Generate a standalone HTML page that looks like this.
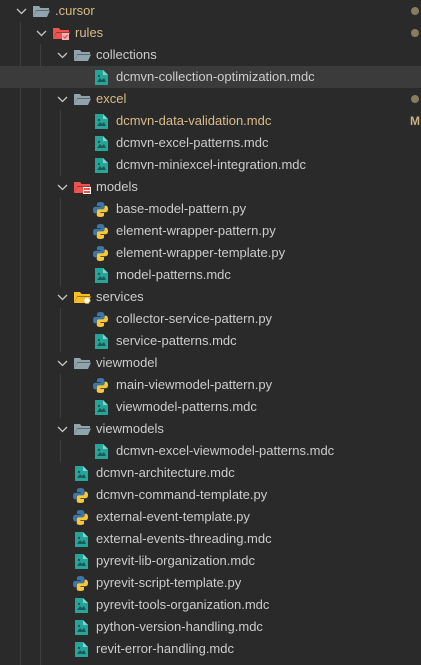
<!DOCTYPE html><html><head><style>
body{margin:0;width:421px;height:665px;background:#2a2a2a;overflow:hidden;font-family:"Liberation Sans",sans-serif;font-size:13px;color:#cccccc;position:relative}
.r{position:absolute;left:0;width:421px;height:22px;line-height:22px;white-space:nowrap}
.sel{background:#3b3b3b}
.t{position:absolute;top:0}
.y{color:#d9bc86}
.dot{position:absolute;left:411px;top:7px;width:8px;height:8px;border-radius:50%;background:#8b7b5e}
.M{position:absolute;left:410px;top:0;color:#c9b07f;font-weight:bold;font-size:12px}
.g{position:absolute;width:1px;background:#3e3e3e}
svg{position:absolute;top:3px}
</style></head><body>
<div class="g" style="left:20px;top:22px;height:643px"></div>
<div class="g" style="left:40px;top:44px;height:621px"></div>
<div class="g" style="left:60px;top:66px;height:22px"></div>
<div class="g" style="left:60px;top:110px;height:66px"></div>
<div class="g" style="left:60px;top:198px;height:88px"></div>
<div class="g" style="left:60px;top:308px;height:44px"></div>
<div class="g" style="left:60px;top:374px;height:44px"></div>
<div class="g" style="left:60px;top:440px;height:22px"></div>
<div id="tree"></div>
<script>
var rows=[
["f",0,".cursor","grey",1,"dot"],["f",1,"rules","red",1,"dot"],["f",2,"collections","grey",0],
["m",3,"dcmvn-collection-optimization.mdc",0,0,"sel"],["f",2,"excel","grey",1,"dot"],
["m",3,"dcmvn-data-validation.mdc",0,1,"M"],["m",3,"dcmvn-excel-patterns.mdc"],["m",3,"dcmvn-miniexcel-integration.mdc"],
["f",2,"models","redm",0],["p",3,"base-model-pattern.py"],["p",3,"element-wrapper-pattern.py"],["p",3,"element-wrapper-template.py"],["m",3,"model-patterns.mdc"],
["f",2,"services","yel",0],["p",3,"collector-service-pattern.py"],["m",3,"service-patterns.mdc"],
["f",2,"viewmodel","grey",0],["p",3,"main-viewmodel-pattern.py"],["m",3,"viewmodel-patterns.mdc"],
["f",2,"viewmodels","grey",0],["m",3,"dcmvn-excel-viewmodel-patterns.mdc"],
["m",2,"dcmvn-architecture.mdc"],["p",2,"dcmvn-command-template.py"],["p",2,"external-event-template.py"],["m",2,"external-events-threading.mdc"],["m",2,"pyrevit-lib-organization.mdc"],["p",2,"pyrevit-script-template.py"],["m",2,"pyrevit-tools-organization.mdc"],["m",2,"python-version-handling.mdc"],["m",2,"revit-error-handling.mdc"]];
var h="";
rows.forEach(function(r,i){
 var tx=Math.round(55+20.3*r[1]);
 var s='<div class="r'+(r[5]=="sel"?" sel":"")+'" style="top:'+(i*22)+'px">';
 if(r[0]=="f"){
  var cx=tx-34, col={grey:"#90a4ae",red:"#ef5350",redm:"#ef5350",yel:"#f9bd26"}[r[3]];
  s+='<svg style="left:'+(cx-5)+'px;top:8px" width="11" height="7"><path d="M1 1l4.5 4.5L10 1" fill="none" stroke="#c5c5c5" stroke-width="1.3"/></svg>';
  s+='<svg style="left:'+(tx-22)+'px;top:5px" width="17" height="13"><path d="M0 1h6l1.5 2H16v2H3.5L0 12z" fill="'+col+'"/><path d="M3.5 5.5H17L14 12H0z" fill="'+col+'"/>'+
   (r[3]=="red"?'<rect x="9" y="6" width="7" height="7" fill="#f8b4b4"/><path d="M10.5 9.5l1.5 1.5 2.5-3" stroke="#e53935" fill="none"/>':'')+
   (r[3]=="redm"?'<rect x="9" y="6" width="8" height="7" fill="#fff"/><rect x="10" y="7" width="6" height="2" fill="#ef5350"/><rect x="10" y="10" width="6" height="2" fill="#ef5350"/>':'')+
   (r[3]=="yel"?'<circle cx="13" cy="9.5" r="3" fill="#fff" stroke="#f9bd26" stroke-dasharray="1.5 1"/>':'')+'</svg>';
 } else if(r[0]=="m"){
  s+='<svg style="left:'+(tx-21)+'px;top:4px" width="13" height="15"><path d="M0 0h8l5 5v10H0z" fill="#26a69a"/><path d="M8 0v5h5" fill="#7fd3c9"/><path d="M2 12l3-4 2 2 2-2 2 4z" fill="#1d5a55"/><circle cx="4" cy="6" r="1.2" fill="#1d5a55"/></svg>';
 } else {
  s+='<svg style="left:'+(tx-23)+'px;top:4px" width="15" height="15"><path d="M7.5 0C4 0 4 1.5 4 1.5V4h3.6v.8H2.5S0 4.5 0 8s2.2 3.4 2.2 3.4H3.5V9.6s0-2 2-2h3.8s1.9 0 1.9-1.9V2S11.5 0 7.5 0z" fill="#3b77a8"/><path d="M7.5 15c3.5 0 3.5-1.5 3.5-1.5V11H7.4v-.8h5.1S15 10.5 15 7s-2.2-3.4-2.2-3.4H11.5v1.8s0 2-2 2H5.7s-1.9 0-1.9 1.9V13S3.5 15 7.5 15z" fill="#f7c83d"/></svg>';
 }
 s+='<span class="t'+(r[4]?" y":"")+'" style="left:'+tx+'px">'+r[2]+'</span>';
 if(r[5]=="dot")s+='<div class="dot"></div>';
 if(r[5]=="M")s+='<span class="M">M</span>';
 h+=s+'</div>';
});
document.getElementById("tree").innerHTML=h;
</script>
</body></html>
